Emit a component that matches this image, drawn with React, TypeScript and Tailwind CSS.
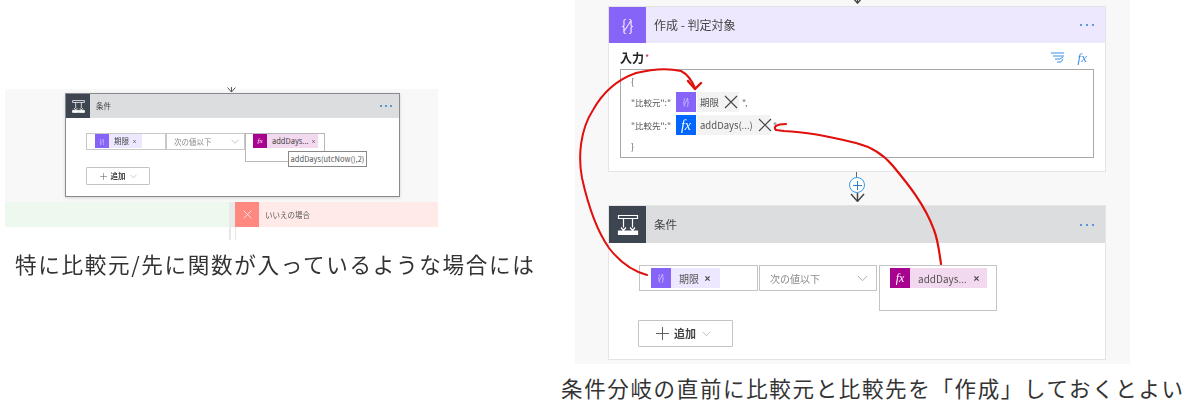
import React from "react";

const font = "font-['Noto_Sans_CJK_JP','Noto_Sans',sans-serif]";

function CondIcon({ size }: { size: number }) {
  return (
    <svg width={size} height={size} viewBox="0 0 24 24" fill="none" stroke="white" strokeWidth="1.2">
      <path d="M2.500 2.500h19v3h-19z" />
      <path d="M7.500 5.500v9M16.500 5.500v9" />
      <path d="M2.500 18h9.500v3.500H2.500zM13 18h8.500v3.500H13z" fill="white" />
      <path d="M5 14.500l2.500 3 2.500-3M14 14.500l2.500 3 2.500-3" />
    </svg>
  );
}

function Cross({ size, color = "#444" }: { size: number; color?: string }) {
  return (
    <svg width={size} height={size} viewBox="0 0 14 14" fill="none" stroke={color} strokeWidth={size < 8 ? 3.2 : 1.1} className="shrink-0">
      <path d="M1 1l12 12M13 1L1 13" />
    </svg>
  );
}

function Chevron({ w, color = "#8a8a8a" }: { w: number; color?: string }) {
  return (
    <svg width={w} height={w / 2 + 1} viewBox="0 0 16 9" fill="none" stroke={color} strokeWidth="1.100" className="shrink-0">
      <path d="M1 1l7 7 7-7" />
    </svg>
  );
}

function Plus({ size }: { size: number }) {
  return (
    <svg width={size} height={size} viewBox="0 0 14 14" fill="none" stroke="#555" strokeWidth="1" className="shrink-0">
      <path d="M7 0v14M0 7h14" />
    </svg>
  );
}

function Dots({ cls }: { cls: string }) {
  return (
    <div className={`flex ${cls}`}>
      <span className="w-[2px] h-[2px] rounded-full bg-[#2f7fd6]" />
      <span className="w-[2px] h-[2px] rounded-full bg-[#2f7fd6]" />
      <span className="w-[2px] h-[2px] rounded-full bg-[#2f7fd6]" />
    </div>
  );
}

function DownArrow({ w }: { w: number }) {
  return (
    <svg width={w} height={w * 0.62} viewBox="0 0 16 10" fill="none" stroke="#444" strokeWidth="1.600" className="block">
      <path d="M1 1l7 8 7-8M8 0v9" />
    </svg>
  );
}

function LeftPanel() {
  return (
    <div className="ml-[5px] mt-[89px] w-[433px] blur-[0.4px]">
      <div className="bg-[#f8f8f8] h-[113px] pt-[4px] pl-[60px] relative">
        <div className="absolute left-[222px] top-[-2px]">
          <DownArrow w={9} />
        </div>
        <div className="w-[335px] h-[104px] border border-[#878b90] bg-white shadow-[0_1px_3px_rgba(0,0,0,0.15)]">
          <div className="flex items-center h-[24px] bg-[#dcddde]">
            <div className="w-[24px] h-[24px] bg-[#3c4550] flex items-center justify-center">
              <CondIcon size={15} />
            </div>
            <span className="ml-[6px] text-[7.500px] text-[#444]">条件</span>
            <Dots cls="ml-auto mr-[7px] gap-[3px]" />
          </div>
          <div className="flex items-start pl-[20px] pt-[15px]">
            <div className="w-[80px] h-[17px] border border-[#c8c8c8] pl-[8px] flex">
              <div className="w-[14px] h-[14px] bg-[#8764f8] text-[6px] text-[#d8ccff] flex items-center justify-center">{"{⁄}"}</div>
              <div className="w-[33px] h-[14px] bg-[#ede8ff] flex items-center pl-[5px] gap-[4px] text-[7.500px] text-[#444]">
                期限<Cross size={3} />
              </div>
            </div>
            <div className="w-[79px] h-[17px] border border-[#c8c8c8] flex items-center justify-between pl-[7px] pr-[5px] text-[7.500px] text-[#8a8a8a]">
              次の値以下<Chevron w={8} color="#9a9a9a" />
            </div>
            <div className="w-[80px] h-[29px] border border-[#b8b8b8] pl-[7px] flex items-start relative">
              <div className="w-[14px] h-[14px] bg-[#a8038f] text-[7px] italic text-white font-['Liberation_Serif',serif] flex items-center justify-center">fx</div>
              <div className="w-[51px] h-[14px] bg-[#f3d9ef] flex items-center pl-[5px] gap-[3px] text-[7.500px] text-[#444] whitespace-nowrap">
                addDays...<Cross size={3} />
              </div>
              <div className="absolute left-[42px] top-[17px] w-[79px] h-[16px] bg-white border border-[#888] text-[7.500px] text-[#555] flex items-center justify-center whitespace-nowrap">
                addDays(utcNow(),2)
              </div>
            </div>
          </div>
          <div className="ml-[20px] mt-[5px] w-[64px] h-[18px] border border-[#c4c4c4] rounded-[1px] flex items-center justify-center gap-[4px] text-[7.500px] text-[#444] font-bold">
            <Plus size={7} />
            <span>追加</span>
            <Chevron w={7} color="#999" />
          </div>
        </div>
      </div>
      <div className="flex h-[25px]">
        <div className="w-[224px] bg-[#edf8ee]" />
        <div className="w-[6px] bg-[#e9e9e9]" />
        <div className="flex-1 bg-[#ffeae7] flex items-center">
          <div className="w-[24px] h-[25px] bg-[#ff8880] flex items-center justify-center">
            <Cross size={9} color="white" />
          </div>
          <span className="ml-[6px] text-[7.500px] text-[#555]">いいえの場合</span>
        </div>
      </div>
      <div className="flex h-[13px]">
        <div className="ml-[224px] w-[2px] bg-[#e6e6e6]" />
        <div className="ml-[4px] w-[1px] bg-[#e6e6e6]" />
      </div>
      <p className="ml-[10px] mt-[11px] text-[21.600px] leading-[26px] tracking-[1.650px] text-[#333] whitespace-nowrap">
        特に比較元/先に関数が入っているような場合には
      </p>
    </div>
  );
}

function Row({ label, icon, iconBg, iconCls, chip, tail, chipW }: { label: string; icon: string; iconBg: string; iconCls: string; chip: string; tail: string; chipW: string }) {
  return (
    <div className="flex items-center h-[20px] text-[8.500px] text-[#555]">
      <span className="w-[45px] whitespace-nowrap">{label}</span>
      <div className={`w-[20px] h-[20px] flex items-center justify-center ${iconBg} ${iconCls}`}>{icon}</div>
      <div className={`h-[20px] ml-[1px] bg-[#f3f3f3] flex items-center pl-[3px] gap-[5px] text-[9.500px] whitespace-nowrap ${chipW}`}>
        {chip}
        <Cross size={14} />
      </div>
      <span className="ml-[3px]">{tail}</span>
    </div>
  );
}

function RightPanel() {
  return (
    <div className="ml-[123px] w-[623px]">
      <div className="ml-[14px] w-[555px] h-[364px] bg-[#f8f8f8] pl-[33px] pt-[6px] blur-[0.4px] relative">
        <div className="absolute left-[276px] top-[-4px]">
          <DownArrow w={13} />
        </div>
        <div className="w-[498px] h-[166px] border border-[#e4e4e4] bg-white">
          <div className="flex items-center h-[36px] bg-[#ede8fd]">
            <div className="w-[37px] h-[36px] bg-[#8764f8] text-[#efeaff] text-[15px] flex items-center justify-center">{"{⁄}"}</div>
            <span className="ml-[8px] text-[12px] text-[#444]">作成 - 判定対象</span>
            <Dots cls="ml-auto mr-[11px] gap-[4px]" />
          </div>
          <div className="flex items-center mt-[8px] mx-[11px] h-[14px]">
            <span className="text-[12px] font-bold text-[#222]">入力</span>
            <span className="text-[9px] text-[#c0304a] ml-[1px]">*</span>
            <svg width="14" height="14" viewBox="0 0 14 14" fill="none" stroke="#3a8ee6" strokeWidth="1" className="ml-auto">
              <path d="M0 2h13M2 5h11M4 8h5l3-2M6 11h4l2-3" />
            </svg>
            <span className="ml-[13px] mr-[7px] text-[13px] italic text-[#3a8ee6] font-['Liberation_Serif',serif]">fx</span>
          </div>
          <div className="mx-[11px] mt-[4px] h-[89px] border border-[#a8a8a8] pl-[10px] pt-[5px] flex flex-col">
            <span className="h-[14px] text-[9px] leading-[14px] text-[#666]">{"{"}</span>
            <div className="mt-[3px]">
              <Row label={'"比較元":"'} icon="{⁄}" iconBg="bg-[#8764f8]" iconCls="text-[8px] text-[#d8ccff]" chip="期限" tail={'",'} chipW="w-[42px]" />
            </div>
            <div className="mt-[3px]">
              <Row label={'"比較先":"'} icon="fx" iconBg="bg-[#0066ff]" iconCls="text-[14px] italic text-white font-['Liberation_Serif',serif]" chip="addDays(...)" tail={'"'} chipW="w-[73px]" />
            </div>
            <span className="mt-[5px] h-[14px] text-[9px] leading-[14px] text-[#666]">{"}"}</span>
          </div>
        </div>
        <div className="flex flex-col items-center w-[498px] h-[33px] relative">
          <div className="absolute left-[248px] top-0 w-[1px] h-[5px] bg-[#666]" />
          <div className="mt-[5px] w-[16px] h-[16px] rounded-full border border-[#3a9be8] bg-white flex items-center justify-center">
            <svg width="9" height="9" viewBox="0 0 9 9" fill="none" stroke="#2d7fd0" strokeWidth="1">
              <path d="M4.500 0v9M0 4.500h9" />
            </svg>
          </div>
          <DownArrow w={15} />
        </div>
        <div className="w-[498px] h-[155px] border border-[#e4e4e4] bg-white">
          <div className="flex items-center h-[37px] bg-[#dcddde]">
            <div className="w-[37px] h-[37px] bg-[#3c4550] flex items-center justify-center">
              <CondIcon size={24} />
            </div>
            <span className="ml-[8px] text-[11.500px] text-[#444]">条件</span>
            <Dots cls="ml-auto mr-[11px] gap-[4px]" />
          </div>
          <div className="flex items-start pl-[30px] pt-[22px]">
            <div className="w-[119px] h-[26px] border border-[#c4c4c4] pl-[11px] pt-[2px] flex">
              <div className="w-[20px] h-[20px] bg-[#8764f8] text-[8px] text-[#d8ccff] flex items-center justify-center">{"{⁄}"}</div>
              <div className="w-[49px] h-[20px] bg-[#ede8ff] flex items-center pl-[8px] gap-[6px] text-[10px] text-[#555]">
                期限<Cross size={5} />
              </div>
            </div>
            <div className="ml-[1px] w-[118px] h-[26px] border border-[#c4c4c4] flex items-center pl-[10px] pr-[8px] justify-between text-[10px] text-[#8a8a8a]">
              次の値以下<Chevron w={11} color="#999" />
            </div>
            <div className="ml-[2px] w-[118px] h-[46px] border border-[#c4c4c4] pl-[10px] pt-[2px] flex items-start">
              <div className="w-[20px] h-[20px] bg-[#a8038f] text-[12px] italic text-white font-['Liberation_Serif',serif] flex items-center justify-center">fx</div>
              <div className="w-[77px] h-[20px] bg-[#f3d9ef] flex items-center pl-[8px] gap-[7px] text-[10px] text-[#555] whitespace-nowrap">
                addDays...<Cross size={5} />
              </div>
            </div>
          </div>
          <div className="ml-[29px] mt-[9px] w-[95px] h-[27px] border border-[#c4c4c4] rounded-[1px] flex items-center pl-[17px] text-[11px] font-bold text-[#444]">
            <Plus size={13} />
            <span className="ml-[5px]">追加</span>
            <span className="ml-[6px]"><Chevron w={9} color="#999" /></span>
          </div>
        </div>
      </div>
      <p className="mt-[11px] text-[21.500px] leading-[26px] tracking-[1.650px] text-[#333] whitespace-nowrap">
        条件分岐の直前に比較元と比較先を「作成」しておくとよい
      </p>
    </div>
  );
}

export default function App() {
  return (
    <div className={`relative flex w-[1200px] h-[420px] overflow-hidden bg-white ${font}`}>
      <LeftPanel />
      <RightPanel />
      <svg width="1200" height="420" viewBox="0 0 1200 420" fill="none" stroke="#e0100c" strokeWidth="2" strokeLinecap="round" strokeLinejoin="round" className="absolute left-0 top-0 pointer-events-none">
        <path d="M647 275C632 271 619 261 609 248C597 231 588 205 582 178C578 157 580 130 593 110C603 92 616 80 636 73C652 69 668 68 681 71C687 74 692 81 695 88" />
        <path d="M688 81L695 89L701 83" strokeWidth="2.400" />
        <path d="M941 264C939 250 938 240 934 230C925 205 908 184 893 166C884 155 872 147 856 143C832 137 808 132 784 131L776 130C773 127 776 124 786 124" strokeWidth="2.200" />
      </svg>
    </div>
  );
}
